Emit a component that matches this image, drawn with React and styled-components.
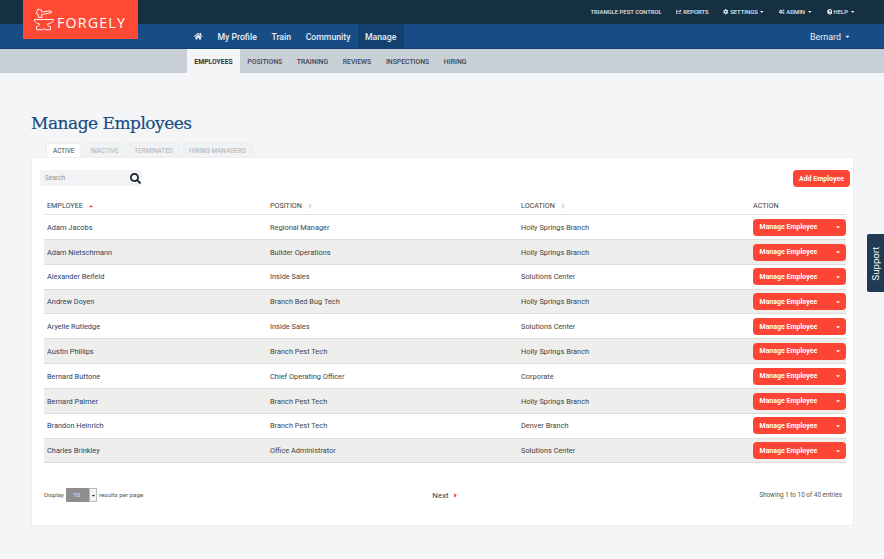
import React from "react"
import styled, { createGlobalStyle } from "styled-components"
import {
  FaHome,
  FaChartLine,
  FaCog,
  FaCogs,
  FaQuestionCircle,
  FaSearch,
  FaCaretDown,
  FaCaretUp,
  FaCaretRight,
  FaSort
} from "react-icons/fa"

const GlobalStyle = createGlobalStyle`
  html, body {
    margin: 0;
    padding: 0;
    background: #f4f5f7;
    font-family: Roboto, "Liberation Sans", sans-serif;
    color: #444;
    overflow: hidden;
  }
  * { box-sizing: border-box; }
`

const Page = styled.div`
  position: relative;
  width: 884px;
  height: 559px;
  overflow: hidden;
`

const LogoBox = styled.div`
  position: absolute;
  left: 23px;
  top: 0;
  width: 115px;
  height: 39px;
  background: #fe4a34;
  display: flex;
  align-items: center;
  padding-left: 11px;
  gap: 3px;
  z-index: 2;
`

const LogoText = styled.span`
  font-family: "Open Sans", sans-serif;
  font-weight: 500;
  font-size: 14.2px;
  letter-spacing: 1.2px;
  color: #fff;
  margin-top: 5px;
`

const TopBar = styled.div`
  height: 24px;
  background: #152f43;
  display: flex;
  justify-content: flex-end;
  align-items: center;
  padding-right: 29px;
  gap: 14.5px;
`

const TopLink = styled.span`
  display: flex;
  align-items: center;
  gap: 1.5px;
  font-size: 5.9px;
  font-weight: 500;
  color: #e3e8ec;
  text-transform: uppercase;
  white-space: nowrap;
  svg { font-size: 5.5px; }
`

const MainNav = styled.div`
  height: 25px;
  background: #174d84;
  border-bottom: 1px solid #12406f;
  display: flex;
  padding-left: 187px;
  padding-right: 33px;
`

const NavItem = styled.span`
  display: flex;
  align-items: center;
  height: 24px;
  padding: 1px 7.3px 0;
  font-size: 8.7px;
  font-weight: 500;
  color: #e8eef4;
  background: ${props => (props.active ? "#12406f" : "transparent")};
  svg { font-size: 8.5px; }
`

const UserMenu = styled.span`
  margin-left: auto;
  display: flex;
  align-items: center;
  gap: 3px;
  padding-top: 1px;
  font-size: 8.9px;
  color: #e8eef4;
  svg { font-size: 7px; }
`

const SubNav = styled.div`
  height: 24px;
  background: #c9d0d8;
  display: flex;
  padding-left: 187px;
`

const SubItem = styled.span`
  display: flex;
  align-items: center;
  padding: 1px 7.3px 0;
  font-size: 6.85px;
  font-weight: ${props => (props.active ? 700 : 500)};
  color: ${props => (props.active ? "#333" : "#3d4650")};
  background: ${props => (props.active ? "#f4f5f7" : "transparent")};
`

const Main = styled.div`
  padding: 39px 30px 0 31px;
`

const Title = styled.h1`
  margin: 0;
  height: 31px;
  font-family: "DejaVu Serif", "Liberation Serif", serif;
  font-weight: 400;
  font-size: 17px;
  letter-spacing: -0.5px;
  line-height: 22px;
  color: #174d84;
  -webkit-text-stroke: 0.2px #174d84;
`

const Tabs = styled.div`
  display: flex;
  gap: 2px;
  padding-left: 15px;
`

const Tab = styled.span`
  height: 14px;
  padding: 0 6px;
  display: flex;
  align-items: center;
  border-radius: 3px 3px 0 0;
  font-size: 6.4px;
  color: ${props => (props.active ? "#444" : "#aeb1b5")};
  background: ${props => (props.active ? "#fff" : "#f1f2f3")};
  border: 1px solid #eceeef;
  border-bottom: none;
`

const Card = styled.div`
  width: 823px;
  height: 369px;
  background: #fff;
  border: 1px solid #eceef0;
  padding: 12px 3px 0 8px;
`

const Toolbar = styled.div`
  display: flex;
  justify-content: space-between;
  align-items: flex-start;
  height: 27px;
`

const SearchBox = styled.div`
  width: 102px;
  height: 16px;
  background: #f2f3f5;
  display: flex;
  align-items: center;
  justify-content: space-between;
  padding: 0 1px 0 5px;
  font-size: 6.6px;
  color: #8f9499;
  svg {
    font-size: 11px;
    color: #16202a;
  }
`

const AddButton = styled.span`
  width: 57px;
  height: 17px;
  background: #fe4434;
  border-radius: 4px;
  display: flex;
  align-items: center;
  justify-content: center;
  font-size: 7px;
  font-weight: 700;
  color: #fff;
`

const Table = styled.div`
  margin-left: 4px;
  width: 802px;
`

const Row = styled.div`
  display: grid;
  grid-template-columns: 223px 251px 232px 96px;
  align-items: center;
  height: 24.85px;
  padding: 0.6px 0 0 3px;
  font-size: 7.4px;
  color: #444;
  background: ${props => (props.even ? "#eeeeed" : "#fff")};
  border-bottom: 1px solid #dcdcdb;
`

const HeadRow = styled(Row)`
  height: 18px;
  padding-top: 0;
  font-size: 7.2px;
  border-bottom: 1px solid #dfe0e0;
  color: #3f3f3f;
`

const HeadCell = styled.span`
  display: flex;
  align-items: center;
  gap: 5px;
`

const SortMark = styled.span`
  display: inline-flex;
  font-size: 6px;
  color: ${props => (props.active ? "#fe3b2f" : "#d4d4d4")};
`

const NameCell = styled.span`
  color: #1e4468;
`

const ManageButton = styled.span`
  width: 93px;
  height: 17px;
  background: #fe4434;
  border-radius: 4px;
  display: flex;
  align-items: center;
  justify-content: space-between;
  padding: 0 5px 0 6.5px;
  font-size: 7px;
  font-weight: 700;
  color: #fff;
  svg { font-size: 6px; }
`

const Footer = styled.div`
  display: grid;
  grid-template-columns: 1fr 1fr 1fr;
  align-items: center;
  margin-top: 25px;
  padding: 0 8px 0 4px;
  font-size: 6.4px;
  color: #555;
`

const Display = styled.div`
  display: flex;
  align-items: center;
  gap: 2px;
  font-size: 6.2px;
`

const PageSelect = styled.div`
  width: 31px;
  height: 14px;
  display: flex;
  background: #8e8e8e;
  color: #eee;
  align-items: center;
  padding-left: 7px;
  justify-content: space-between;
  border-radius: 1px;
`

const SelectArrow = styled.span`
  width: 8px;
  height: 14px;
  display: flex;
  align-items: center;
  justify-content: center;
  background: #f3f3f3;
  border: 1px solid #bbb;
  color: #222;
  font-size: 5px;
`

const NextLink = styled.span`
  display: flex;
  align-items: center;
  justify-content: center;
  gap: 3px;
  margin-left: 5px;
  font-size: 7.9px;
  color: #2a4258;
  svg {
    font-size: 7px;
    color: #fe3b2f;
  }
`

const Entries = styled.span`
  text-align: right;
`

const SupportTab = styled.div`
  position: absolute;
  right: 0;
  top: 234px;
  width: 17px;
  height: 58px;
  background: #1f3a52;
  border-radius: 2px 0 0 2px;
  display: flex;
  align-items: center;
  justify-content: center;
`

const SupportText = styled.span`
  transform: rotate(-90deg);
  font-size: 9.6px;
  color: #fff;
`

const employees = [
  ["Adam Jacobs", "Regional Manager", "Holly Springs Branch"],
  ["Adam Nietschmann", "Builder Operations", "Holly Springs Branch"],
  ["Alexander Beifeld", "Inside Sales", "Solutions Center"],
  ["Andrew Doyen", "Branch Bed Bug Tech", "Holly Springs Branch"],
  ["Aryelle Rutledge", "Inside Sales", "Solutions Center"],
  ["Austin Phillips", "Branch Pest Tech", "Holly Springs Branch"],
  ["Bernard Buttone", "Chief Operating Officer", "Corporate"],
  ["Bernard Palmer", "Branch Pest Tech", "Holly Springs Branch"],
  ["Brandon Heinrich", "Branch Pest Tech", "Denver Branch"],
  ["Charles Brinkley", "Office Administrator", "Solutions Center"]
]

// hammer over an anvil, outline only
function Anvil() {
  return (
    <svg width="20" height="23" viewBox="0 0 20 23" fill="none" stroke="#fff" strokeWidth="0.9">
      <path d="M4 1l3.500 1v1.800L17 3l.3 1.800L7.500 6.500 8 9.500H4.500L4 6 2 5.500z" />
      <path d="M.5 11.500h19v1.200c-1.500 2-3.500 2.800-6 3.300 0 1.300 1 2.200 3 2.700v3h-5.800l-1-1.300-1 1.300H2.500v-3c2-.5 3-1.400 3-2.700C3 15.500 1 14.500.5 12.700z" />
    </svg>
  )
}

function App() {
  return (
    <Page>
      <GlobalStyle />
      <LogoBox>
        <Anvil />
        <LogoText>FORGELY</LogoText>
      </LogoBox>
      <TopBar>
        <TopLink>Triangle Pest Control</TopLink>
        <TopLink><FaChartLine /> Reports</TopLink>
        <TopLink><FaCog /> Settings <FaCaretDown /></TopLink>
        <TopLink><FaCogs /> Admin <FaCaretDown /></TopLink>
        <TopLink><FaQuestionCircle /> Help <FaCaretDown /></TopLink>
      </TopBar>
      <MainNav>
        <NavItem><FaHome /></NavItem>
        <NavItem>My Profile</NavItem>
        <NavItem>Train</NavItem>
        <NavItem>Community</NavItem>
        <NavItem active>Manage</NavItem>
        <UserMenu>Bernard <FaCaretDown /></UserMenu>
      </MainNav>
      <SubNav>
        <SubItem active>EMPLOYEES</SubItem>
        <SubItem>POSITIONS</SubItem>
        <SubItem>TRAINING</SubItem>
        <SubItem>REVIEWS</SubItem>
        <SubItem>INSPECTIONS</SubItem>
        <SubItem>HIRING</SubItem>
      </SubNav>
      <Main>
        <Title>Manage Employees</Title>
        <Tabs>
          <Tab active>ACTIVE</Tab>
          <Tab>INACTIVE</Tab>
          <Tab>TERMINATED</Tab>
          <Tab>HIRING MANAGERS</Tab>
        </Tabs>
        <Card>
          <Toolbar>
            <SearchBox>Search <FaSearch /></SearchBox>
            <AddButton>Add Employee</AddButton>
          </Toolbar>
          <Table>
            <HeadRow>
              <HeadCell>EMPLOYEE <SortMark active><FaCaretUp /></SortMark></HeadCell>
              <HeadCell>POSITION <SortMark><FaSort /></SortMark></HeadCell>
              <HeadCell>LOCATION <SortMark><FaSort /></SortMark></HeadCell>
              <HeadCell>ACTION</HeadCell>
            </HeadRow>
            {employees.map(([name, position, location], i) => (
              <Row key={name} even={i % 2 === 1}>
                <NameCell>{name}</NameCell>
                <span>{position}</span>
                <span>{location}</span>
                <ManageButton>Manage Employee <FaCaretDown /></ManageButton>
              </Row>
            ))}
          </Table>
          <Footer>
            <Display>
              Display
              <PageSelect>10 <SelectArrow><FaCaretDown /></SelectArrow></PageSelect>
              results per page
            </Display>
            <NextLink>Next <FaCaretRight /></NextLink>
            <Entries>Showing 1 to 10 of 40 entries</Entries>
          </Footer>
        </Card>
      </Main>
      <SupportTab>
        <SupportText>Support</SupportText>
      </SupportTab>
    </Page>
  )
}

export default App
